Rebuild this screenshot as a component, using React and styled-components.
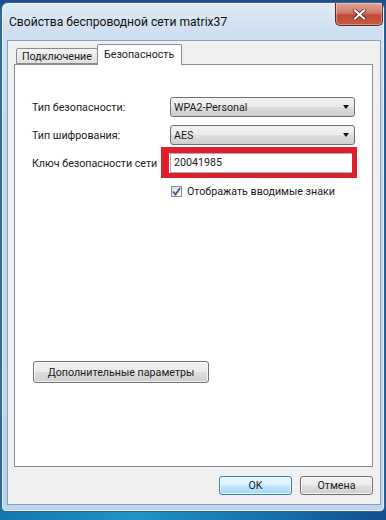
import React from 'react';
import styled, { createGlobalStyle } from 'styled-components';

const GlobalStyle = createGlobalStyle`
  html, body {
    margin: 0;
    padding: 0;
  }
  body {
    width: 386px;
    height: 520px;
    overflow: hidden;
    font-family: Roboto, "Noto Sans", "DejaVu Sans", sans-serif;
    font-size: 10.7px;
    color: #1b1b1b;
  }
`;

const Desktop = styled.div`
  width: 386px;
  height: 520px;
  box-sizing: border-box;
  padding: 2px 1px 8px 1px;
  display: flex;
  background:
    linear-gradient(180deg, #1c4f8c 0px, #1e5c9e 6px, rgba(0,0,0,0) 12px),
    linear-gradient(90deg, #1478b0 0%, #1f93c6 35%, #1670ac 70%, #124f8e 100%);
`;

const Window = styled.div`
  flex: 1;
  display: flex;
  flex-direction: column;
  border: 1px solid #3f5f86;
  border-radius: 7px 7px 5px 5px;
  background: linear-gradient(180deg, #dfeaf6 0px, #cfe0f2 30px, #c2d8ef 120px, #bcd4ed 100%);
  box-shadow: inset 0 0 0 1px rgba(255,255,255,0.6);
  padding: 0 3px 6px 5px;
`;

const TitleBar = styled.div`
  height: 37px;
  display: flex;
  justify-content: space-between;
  align-items: flex-start;
`;

const Title = styled.span`
  padding: 12px 0 0 2px;
  font-size: 12.1px;
  color: #111;
`;

const CloseButton = styled.div`
  width: 48px;
  height: 23px;
  margin-right: -2px;
  box-sizing: border-box;
  border: 1px solid #5c2a25;
  border-top: none;
  border-radius: 0 0 5px 5px;
  background: linear-gradient(180deg, #e3a496 0%, #d07a68 45%, #bf4a36 55%, #c65a44 100%);
  box-shadow: inset 0 0 0 1px rgba(255,255,255,0.35);
  display: flex;
  align-items: center;
  justify-content: center;
`;

const Content = styled.div`
  flex: 1;
  display: flex;
  flex-direction: column;
  background: #f0f0f0;
  border: 1px solid #8aa2c0;
  padding: 3px 7px 9px 6px;
`;

const TabRow = styled.div`
  display: flex;
  align-items: flex-end;
  height: 20px;
  padding-left: 2px;
  position: relative;
  z-index: 1;
`;

const Tab = styled.div`
  box-sizing: border-box;
  border: 1px solid #898c95;
  border-bottom: ${p => (p.$active ? 'none' : '1px solid #898c95')};
  background: ${p => (p.$active ? '#fff' : 'linear-gradient(180deg, #f4f4f4, #e2e2e2)')};
  height: ${p => (p.$active ? '21px' : '16px')};
  margin-bottom: ${p => (p.$active ? '-1px' : '0')};
  margin-left: ${p => (p.$active ? '-1px' : '0')};
  width: ${p => p.$width}px;
  padding: ${p => (p.$active ? '2px 0 0 6px' : '0 0 0 5px')};
  line-height: ${p => (p.$active ? '16px' : '15px')};
  border-radius: 2px 2px 0 0;
  white-space: nowrap;
`;

const Panel = styled.div`
  flex: 1;
  display: flex;
  flex-direction: column;
  background: #fff;
  border: 1px solid #898c95;
  padding: 32px 0 0 17px;
`;

const Form = styled.div`
  display: grid;
  grid-template-columns: 138px 185px;
  grid-auto-rows: 20px;
  row-gap: 8px;
  align-items: center;
`;

const Label = styled.span`
  white-space: nowrap;
`;

const Combo = styled.div`
  height: 20px;
  box-sizing: border-box;
  border: 1px solid #707070;
  border-radius: 3px;
  background: linear-gradient(180deg, #f3f3f3 0%, #ebebeb 48%, #dddddd 52%, #cfcfcf 100%);
  display: flex;
  align-items: center;
  justify-content: space-between;
  padding: 0 5px 0 3px;
`;

const Arrow = styled.span`
  width: 0;
  height: 0;
  border-left: 3.5px solid transparent;
  border-right: 3.5px solid transparent;
  border-top: 4px solid #111;
`;

const KeyCell = styled.div`
  position: relative;
  height: 20px;
`;

const KeyInput = styled.div`
  height: 20px;
  box-sizing: border-box;
  border: 1px solid #abadb3;
  background: #fff;
  padding: 0 0 0 3px;
  line-height: 18px;
`;

const RedFrame = styled.span`
  position: absolute;
  left: -9px;
  right: -2px;
  top: -6px;
  bottom: -5px;
  border-style: solid;
  border-color: #e01f2c;
  border-width: 6px 5px 5px 8px;
`;

const CheckRow = styled.label`
  display: flex;
  align-items: center;
  gap: 5px;
  padding-left: 1px;
  white-space: nowrap;
`;

const CheckBox = styled.span`
  width: 11px;
  height: 11px;
  box-sizing: border-box;
  border: 1px solid #8e8f8f;
  background: linear-gradient(135deg, #dcdcdc, #fbfbfb);
  display: flex;
  align-items: center;
  justify-content: center;
`;

const Button = styled.div`
  box-sizing: border-box;
  width: ${p => p.$width}px;
  height: ${p => p.$height}px;
  border: 1px solid ${p => (p.$default ? '#3c7fb1' : '#707070')};
  border-radius: 3px;
  background: ${p =>
    p.$default
      ? 'linear-gradient(180deg, #eaf6fd 0%, #d9f0fc 48%, #bee6fd 52%, #a7d9f5 100%)'
      : 'linear-gradient(180deg, #f2f2f2 0%, #ebebeb 48%, #dddddd 52%, #cfcfcf 100%)'};
  box-shadow: inset 0 0 0 1px rgba(255,255,255,0.7);
  display: flex;
  align-items: center;
  justify-content: center;
  white-space: nowrap;
`;

const AdvancedButton = styled(Button)`
  margin: 160px 0 0 1px;
`;

const Footer = styled.div`
  display: flex;
  justify-content: flex-end;
  gap: 8px;
  padding-top: 9px;
`;

export default function App() {
  return (
    <>
      <GlobalStyle />
      <Desktop>
        <Window>
          <TitleBar>
            <Title>Свойства беспроводной сети matrix37</Title>
            <CloseButton>
              <svg width="13" height="11" viewBox="0 0 13 11">
                <path d="M2 1.5 L11 9.5 M11 1.5 L2 9.5" stroke="#4a1a14" strokeWidth="3.6" strokeLinecap="square" />
                <path d="M2 1.5 L11 9.5 M11 1.5 L2 9.5" stroke="#fff" strokeWidth="2.2" strokeLinecap="square" />
              </svg>
            </CloseButton>
          </TitleBar>
          <Content>
            <TabRow>
              <Tab $width={82}>Подключение</Tab>
              <Tab $active $width={85}>Безопасность</Tab>
            </TabRow>
            <Panel>
              <Form>
                <Label>Тип безопасности:</Label>
                <Combo>
                  <span>WPA2-Personal</span>
                  <Arrow />
                </Combo>
                <Label>Тип шифрования:</Label>
                <Combo>
                  <span>AES</span>
                  <Arrow />
                </Combo>
                <Label>Ключ безопасности сети</Label>
                <KeyCell>
                  <KeyInput>20041985</KeyInput>
                  <RedFrame />
                </KeyCell>
                <span />
                <CheckRow>
                  <CheckBox>
                    <svg width="9" height="9" viewBox="0 0 9 9">
                      <path d="M1 4.5 L3.5 7.5 L8 1" fill="none" stroke="#3d5a98" strokeWidth="1.8" />
                    </svg>
                  </CheckBox>
                  Отображать вводимые знаки
                </CheckRow>
              </Form>
              <AdvancedButton $width={176} $height={22}>Дополнительные параметры</AdvancedButton>
            </Panel>
            <Footer>
              <Button $default $width={73} $height={19}>OK</Button>
              <Button $width={73} $height={19}>Отмена</Button>
            </Footer>
          </Content>
        </Window>
      </Desktop>
    </>
  );
}
